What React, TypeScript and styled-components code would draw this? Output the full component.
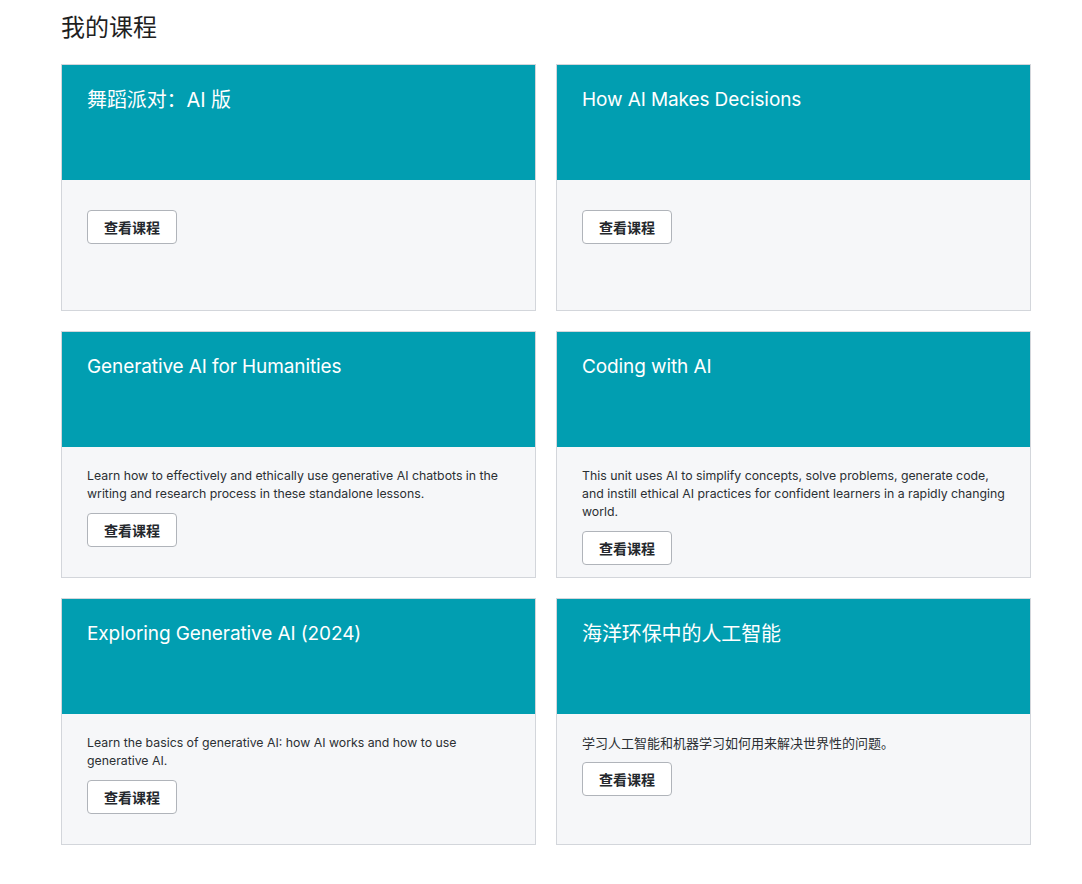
import React from "react";
import styled, { createGlobalStyle } from "styled-components";

const Global = createGlobalStyle`
  html, body { margin: 0; padding: 0; background: #ffffff; }
  body { font-family: "Inter", "Noto Sans CJK SC", sans-serif; color: #1f2328; }
`;

const Page = styled.div`
  width: 970px;
  margin-left: 61px;
  padding-top: 9px;
`;

const Heading = styled.h1`
  margin: 0 0 21px 0;
  font-size: 24px;
  font-weight: 400;
  line-height: 34px;
  color: #1f1f1f;
  font-family: "Noto Sans CJK SC", sans-serif;
`;

const Grid = styled.div`
  display: grid;
  grid-template-columns: 475px 475px;
  column-gap: 20px;
  row-gap: 20px;
`;

const Card = styled.div`
  height: 247px;
  box-sizing: border-box;
  border: 1px solid #d3d6db;
  display: flex;
  flex-direction: column;
  background: #f6f7f9;
`;

const Header = styled.div`
  height: 115px;
  flex: none;
  background: #019eb1;
  padding: 22px 25px 0 25px;
  box-sizing: border-box;
`;

const Title = styled.h2<{ $cjk?: boolean }>`
  margin: 0;
  font-size: ${(p) => (p.$cjk ? "20px" : "19px")};
  font-weight: 400;
  line-height: 26px;
  color: #ffffff;
  letter-spacing: -0.1px;
`;

const Body = styled.div`
  padding: 20px 25px;
  flex: 1;
`;

const Desc = styled.p<{ $cjk?: boolean }>`
  margin: 0 0 10px 0;
  font-size: ${(p) => (p.$cjk ? "13px" : "12.3px")};
  line-height: 18px;
  color: #2b2f33;
`;

const Spacer = styled.div`
  height: 10px;
`;

const Button = styled.button`
  height: 34px;
  width: 90px;
  box-sizing: border-box;
  border: 1px solid #b0b4ba;
  border-radius: 4px;
  background: #ffffff;
  font-family: "Noto Sans CJK SC", sans-serif;
  font-size: 14px;
  font-weight: 600;
  color: #24282d;
  cursor: pointer;
  padding: 0;
`;

type Course = { title: string; desc?: string; cjk?: boolean };

const courses: Course[] = [
  { title: "舞蹈派对：AI 版", cjk: true },
  { title: "How AI Makes Decisions" },
  {
    title: "Generative AI for Humanities",
    desc: "Learn how to effectively and ethically use generative AI chatbots in the writing and research process in these standalone lessons.",
  },
  {
    title: "Coding with AI",
    desc: "This unit uses AI to simplify concepts, solve problems, generate code, and instill ethical AI practices for confident learners in a rapidly changing world.",
  },
  {
    title: "Exploring Generative AI (2024)",
    desc: "Learn the basics of generative AI: how AI works and how to use generative AI.",
  },
  {
    title: "海洋环保中的人工智能",
    desc: "学习人工智能和机器学习如何用来解决世界性的问题。",
    cjk: true,
  },
];

export default function App() {
  return (
    <>
      <Global />
      <Page>
        <Heading>我的课程</Heading>
        <Grid>
          {courses.map((c) => (
            <Card key={c.title}>
              <Header>
                <Title $cjk={c.cjk}>{c.title}</Title>
              </Header>
              <Body>
                {c.desc ? <Desc $cjk={c.cjk}>{c.desc}</Desc> : <Spacer />}
                <Button>查看课程</Button>
              </Body>
            </Card>
          ))}
        </Grid>
      </Page>
    </>
  );
}
